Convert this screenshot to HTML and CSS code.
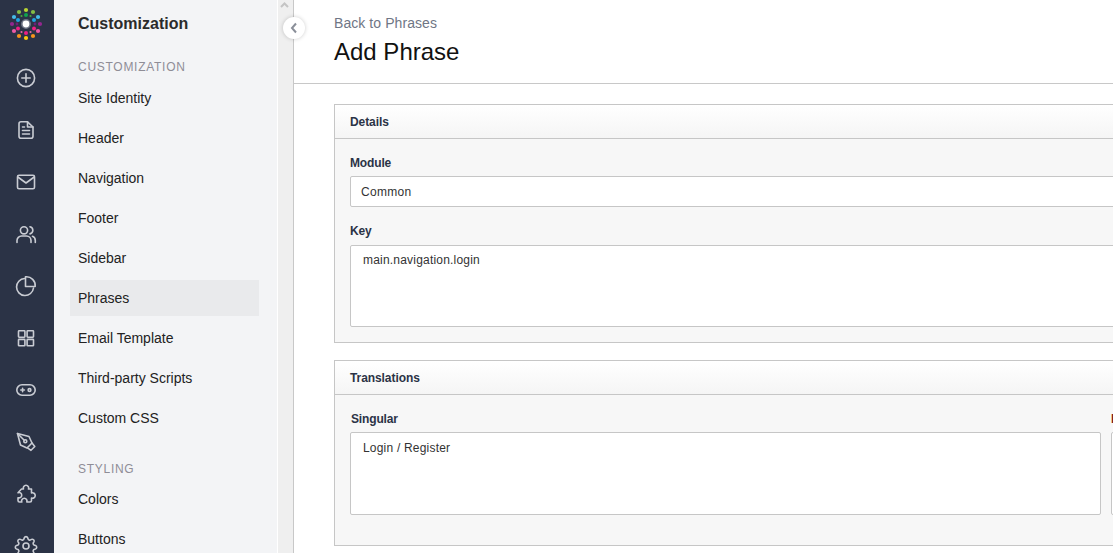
FILE: index.html
```html
<!DOCTYPE html>
<html>
<head>
    <title>Add Phrase</title>
    <link rel="stylesheet" href="styles.css">
</head>
<body>
    <div class="page">
        <div class="rail">
            <div class="rail-logo">
                <svg width="34" height="34" viewBox="9 7 34 34">
                    <circle cx="26" cy="10" r="2.100" fill="#b8d433"/>
                    <circle cx="19" cy="12" r="2.100" fill="#84bd45"/>
                    <circle cx="33" cy="12" r="2.100" fill="#84bd45"/>
                    <circle cx="14" cy="17" r="2.100" fill="#45bce9"/>
                    <circle cx="38" cy="17" r="2.100" fill="#45bce9"/>
                    <circle cx="12" cy="24" r="2.100" fill="#93278f"/>
                    <circle cx="40" cy="24" r="2.100" fill="#93278f"/>
                    <circle cx="14" cy="31" r="2.100" fill="#ec5aa5"/>
                    <circle cx="38" cy="31" r="2.100" fill="#ec5aa5"/>
                    <circle cx="19" cy="36" r="2.100" fill="#f7941d"/>
                    <circle cx="33" cy="36" r="2.100" fill="#f7941d"/>
                    <circle cx="26" cy="38" r="2.100" fill="#ffc90e"/>
                    <circle cx="26" cy="15" r="2" fill="#0fa34f"/>
                    <circle cx="18" cy="20" r="2" fill="#1fa3df"/>
                    <circle cx="34" cy="20" r="2" fill="#1fa3df"/>
                    <circle cx="17" cy="24" r="1.400" fill="#6d2077"/>
                    <circle cx="35" cy="24" r="1.400" fill="#6d2077"/>
                    <circle cx="18" cy="28.500" r="2" fill="#ec1f85"/>
                    <circle cx="34" cy="28.500" r="2" fill="#ec1f85"/>
                    <circle cx="26" cy="33" r="2" fill="#ec1f85"/>
                    <circle cx="21.500" cy="16" r="1.100" fill="#4da83e"/>
                    <circle cx="30.500" cy="16" r="1.100" fill="#4da83e"/>
                    <circle cx="21.500" cy="32" r="1.100" fill="#e56aa8"/>
                    <circle cx="30.500" cy="32" r="1.100" fill="#e56aa8"/>
                    <circle cx="26" cy="24" r="4.200" fill="#fff" stroke="#6c7384" stroke-width="1.600"/>
                </svg>
            </div>
            <div class="rail-item">
                <svg class="rail-icon" viewBox="0 0 24 24"><circle cx="12" cy="12" r="8.600"/><path d="M12 7.800v8.400M7.800 12h8.400"/></svg>
            </div>
            <div class="rail-item">
                <svg class="rail-icon" viewBox="0 0 24 24"><path d="M13.500 3.800H7a2 2 0 0 0-2 2v12.400a2 2 0 0 0 2 2h10a2 2 0 0 0 2-2V9z"/><path d="M13.500 3.800V9H19M8.500 12.500h7M8.500 16h7M8.500 9h2"/></svg>
            </div>
            <div class="rail-item">
                <svg class="rail-icon" viewBox="0 0 24 24"><rect x="3.500" y="5.200" width="17" height="13.600" rx="1.500"/><path d="M3.800 7l8.200 6 8.200-6"/></svg>
            </div>
            <div class="rail-item">
                <svg class="rail-icon" viewBox="0 0 24 24"><circle cx="10" cy="8.300" r="3.600"/><path d="M3 20.500v-2a4.500 4.500 0 0 1 4.500-4.500h5a4.500 4.500 0 0 1 4.500 4.500v2"/><path d="M16 4.700a3.700 3.700 0 0 1 0 7.200M18.500 14.300a4.500 4.500 0 0 1 2.800 4.200v2"/></svg>
            </div>
            <div class="rail-item">
                <svg class="rail-icon" viewBox="0 0 24 24"><path d="M10.500 4.500a8.500 8.500 0 1 0 9 9.500"/><path d="M11.500 2.800a8.800 8.800 0 0 1 9.700 9.700h-9.700z"/></svg>
            </div>
            <div class="rail-item">
                <svg class="rail-icon" viewBox="0 0 24 24"><rect x="4.500" y="4.800" width="6.400" height="6.400" rx=".6"/><rect x="13.100" y="4.800" width="6.400" height="6.400" rx=".6"/><rect x="4.500" y="13.400" width="6.400" height="6.400" rx=".6"/><rect x="13.100" y="13.400" width="6.400" height="6.400" rx=".6"/></svg>
            </div>
            <div class="rail-item">
                <svg class="rail-icon" viewBox="0 0 24 24"><rect x="2.800" y="6.800" width="18.400" height="10.400" rx="5.200"/><path d="M6.800 12h3.600M8.600 10.200v3.600"/><circle cx="15.500" cy="12" r="1.400"/></svg>
            </div>
            <div class="rail-item">
                <svg class="rail-icon" viewBox="0 0 24 24"><path d="M3.500 3.500l11.500 3 3 6.500-5 5-6.500-3z"/><path d="M18 13l2.800 3.500-3.800 3.800-3.500-2.500"/><path d="M3.500 3.500l7 7"/><circle cx="11.300" cy="11.300" r="1.500"/></svg>
            </div>
            <div class="rail-item">
                <svg class="rail-icon" viewBox="0 0 24 24"><path d="M7.500 7h2a2.700 2.700 0 1 1 5 0h3v4a2.700 2.700 0 1 1 0 5v2.500a1.500 1.500 0 0 1-1.500 1.500h-3.200a2.700 2.700 0 1 0-5 0H5.500A1.500 1.500 0 0 1 4 18.500v-2.800a2.700 2.700 0 1 0 0-5z"/></svg>
            </div>
            <div class="rail-item">
                <svg class="rail-icon" viewBox="0 0 24 24"><circle cx="12" cy="12" r="3"/><path d="M10.300 3.800a1.800 1.800 0 0 1 3.400 0l.3 1a1.800 1.800 0 0 0 2.600 1.100l.9-.5a1.800 1.800 0 0 1 2.400 2.400l-.5.900a1.800 1.800 0 0 0 1.100 2.600l1 .3a1.800 1.800 0 0 1 0 3.400l-1 .3a1.800 1.800 0 0 0-1.100 2.600l.5.900a1.800 1.800 0 0 1-2.400 2.400l-.9-.5a1.800 1.800 0 0 0-2.600 1.100l-.3 1a1.800 1.800 0 0 1-3.400 0l-.3-1a1.800 1.800 0 0 0-2.600-1.100l-.9.500a1.800 1.800 0 0 1-2.400-2.400l.5-.9a1.800 1.800 0 0 0-1.100-2.600l-1-.3a1.800 1.800 0 0 1 0-3.400l1-.3a1.800 1.800 0 0 0 1.100-2.600l-.5-.9a1.800 1.800 0 0 1 2.400-2.400l.9.5a1.800 1.800 0 0 0 2.600-1.100z"/></svg>
            </div>
        </div>

        <div class="sidebar">
            <div class="sidebar-title">Customization</div>
            <div class="nav-section">Customization</div>
            <a class="nav-item">Site Identity</a>
            <a class="nav-item">Header</a>
            <a class="nav-item">Navigation</a>
            <a class="nav-item">Footer</a>
            <a class="nav-item">Sidebar</a>
            <a class="nav-item active">Phrases</a>
            <a class="nav-item">Email Template</a>
            <a class="nav-item">Third-party Scripts</a>
            <a class="nav-item">Custom CSS</a>
            <div class="nav-section styling">Styling</div>
            <a class="nav-item">Colors</a>
            <a class="nav-item">Buttons</a>
        </div>

        <div class="scroll-strip">
            <svg class="scroll-arrow" width="9" height="6" viewBox="0 0 9 6"><path d="M1 5l3.500-3.500L8 5"/></svg>
        </div>

        <div class="main">
            <div class="collapse-btn">
                <svg width="8" height="12" viewBox="0 0 8 12"><path d="M6 1.500L2 6l4 4.500"/></svg>
            </div>
            <div class="main-head">
                <a class="back-link">Back to Phrases</a>
                <h1>Add Phrase</h1>
            </div>
            <div class="main-body">
                <div class="panel">
                    <div class="panel-head">Details</div>
                    <div class="panel-body">
                        <label>Module</label>
                        <div class="field select-field">Common</div>
                        <label class="key-label">Key</label>
                        <div class="field key-field">main.navigation.login</div>
                    </div>
                </div>
                <div class="panel">
                    <div class="panel-head">Translations</div>
                    <div class="panel-body trans-body">
                        <div>
                            <label class="trans-label">Singular</label>
                            <div class="field trans-field">Login / Register</div>
                        </div>
                        <div>
                            <label class="plural">Plural</label>
                            <div class="field trans-field"></div>
                        </div>
                    </div>
                </div>
            </div>
        </div>
    </div>
</body>
</html>
```

FILE: styles.css
```css
html, body {
    margin: 0;
    height: 100%;
    overflow: hidden;
}
body {
    font-family: "Liberation Sans", Arial, sans-serif;
    background-color: #fff;
    color: #222;
}
.page {
    display: flex;
    height: 553px;
    overflow: hidden;
}

/* left icon rail */
.rail {
    flex: none;
    width: 54px;
    box-sizing: border-box;
    padding-right: 2px;
    background-color: #2b3346;
}
.rail-logo {
    height: 52px;
    display: flex;
    align-items: center;
    justify-content: center;
    padding-bottom: 4px;
    box-sizing: border-box;
}
.rail-item {
    height: 52px;
    display: flex;
    align-items: center;
    justify-content: center;
}
.rail-icon {
    width: 24px;
    height: 24px;
    fill: none;
    stroke: #c9ccd3;
    stroke-width: 1.600;
    stroke-linecap: round;
    stroke-linejoin: round;
}

/* customization sidebar */
.sidebar {
    flex: none;
    width: 207px;
    height: 553px;
    background-color: #f3f4f6;
    border-right: 1px solid #fff;
    padding-left: 16px;
}
.sidebar-title {
    font-size: 16px;
    font-weight: bold;
    line-height: 18px;
    margin: 15px 0 0 8px;
    color: #2b2b2b;
}
.nav-section {
    font-size: 12px;
    line-height: 14px;
    letter-spacing: 0.72px;
    text-transform: uppercase;
    color: #8f8d96;
    margin: 27px 0 6px 8px;
}
.nav-section.styling {
    margin-top: 26px;
    margin-bottom: 5px;
}
.nav-item {
    display: block;
    width: 181px;
    height: 36px;
    line-height: 36px;
    padding-left: 8px;
    margin-bottom: 4px;
    font-size: 14px;
    color: #222;
}
.nav-item.active {
    background-color: #e9eaec;
}
.scroll-strip {
    flex: none;
    width: 15px;
    background-color: #efefef;
    border-right: 1px solid #c8c8c8;
}
.scroll-arrow {
    display: block;
    margin: 2px 0 0 2px;
    fill: none;
    stroke: #c4c4c4;
    stroke-width: 2;
}

/* main area */
.main {
    flex: none;
    width: 1623px;
}
.collapse-btn {
    position: absolute;
    left: 283px;
    top: 17px;
    width: 22px;
    height: 22px;
    border-radius: 50%;
    background-color: #fff;
    box-shadow: 0 0 4px rgba(0,0,0,0.2);
    display: flex;
    align-items: center;
    justify-content: center;
}
.collapse-btn svg {
    fill: none;
    stroke: #8a8f99;
    stroke-width: 2;
}
.main-head {
    height: 84px;
    box-sizing: border-box;
    padding: 15px 0 0 40px;
    border-bottom: 1px solid #c8c8c8;
}
.back-link {
    display: block;
    font-size: 14px;
    line-height: 16px;
    letter-spacing: 0.07px;
    color: #6f7685;
}
h1 {
    font-size: 24px;
    font-weight: normal;
    line-height: 28px;
    margin: 7px 0 0;
    color: #111;
}
.main-body {
    padding: 20px 0 0 40px;
}
.panel {
    width: 1543px;
    box-sizing: border-box;
    border: 1px solid #c6c6c6;
    background-color: #f7f7f7;
    margin-bottom: 17px;
}
.panel-head {
    height: 33px;
    line-height: 35px;
    padding-left: 15px;
    font-size: 12px;
    font-weight: bold;
    letter-spacing: -0.08px;
    color: #2b3346;
    background: linear-gradient(#fff, #f5f5f5);
    border-bottom: 1px solid #c6c6c6;
}
.panel-body {
    padding: 17px 15px 15px;
}
label {
    display: block;
    font-size: 12px;
    font-weight: bold;
    line-height: 14px;
    letter-spacing: -0.15px;
    color: #2b3346;
    margin-bottom: 6px;
}
.key-label {
    margin-top: 17px;
    margin-bottom: 7px;
}
.trans-label {
    margin-left: 1px;
}
.plural {
    color: #7a2020;
}
.field {
    box-sizing: border-box;
    background-color: #fff;
    border: 1px solid #c6c6c6;
    border-radius: 2px;
    font-size: 12px;
    letter-spacing: 0.2px;
    color: #333;
}
.select-field {
    height: 31px;
    line-height: 30px;
    padding-left: 10px;
    letter-spacing: 0.3px;
}
.key-field {
    height: 82px;
    padding: 7px 12px;
    line-height: 14px;
}
.trans-body {
    display: grid;
    grid-template-columns: 751px 750px;
    gap: 10px;
    padding: 17px 15px 30px;
}
.trans-field {
    height: 83px;
    padding: 8px 12px;
    line-height: 14px;
}
```
